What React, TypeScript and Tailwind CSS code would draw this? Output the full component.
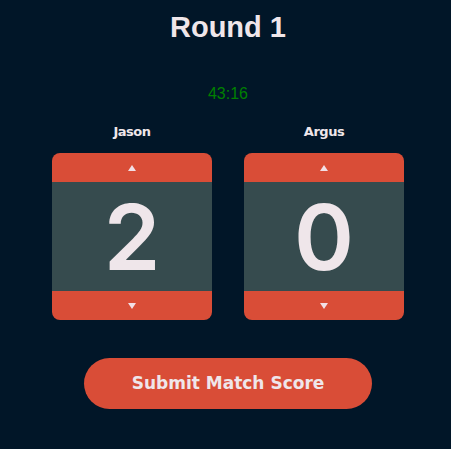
import React from "react";

function Card({ value }: { value: number }) {
  return (
    <div className="w-[160px] h-[167px] rounded-[8px] overflow-hidden flex flex-col">
      <div className="h-[29px] bg-[#d94d37] flex items-center justify-center">
        <svg width="8" height="6" viewBox="0 0 8 6"><polygon points="4,0 8,6 0,6" fill="#f2dfe6" /></svg>
      </div>
      <div className="flex-1 bg-[#364b4e] flex items-center justify-center">
        <span className="text-[91px] leading-none font-semibold text-[#efe6ea] font-['Inter',sans-serif] mt-[2px]">{value}</span>
      </div>
      <div className="h-[29px] bg-[#d94d37] flex items-center justify-center">
        <svg width="8" height="6" viewBox="0 0 8 6"><polygon points="0,0 8,0 4,6" fill="#f2dfe6" /></svg>
      </div>
    </div>
  );
}

export default function App() {
  return (
    <div className="w-[451px] h-[449px] bg-[#011628] flex flex-col items-center pl-[5px] font-['DejaVu_Sans',sans-serif] text-[#efe6ea]">
      <h1 className="mt-[9px] text-[29px] leading-[36px] font-bold font-['Liberation_Sans',sans-serif]">Round 1</h1>
      <div className="mt-[39px] text-[16px] leading-[20px] text-[#008000] font-['Liberation_Sans',sans-serif]">43:16</div>
      <div className="mt-[20px] flex gap-[32px]">
        <div className="flex flex-col items-center">
          <div className="text-[13px] leading-[16px] font-bold tracking-[-0.5px] mb-[13px]">Jason</div>
          <Card value={2} />
        </div>
        <div className="flex flex-col items-center">
          <div className="text-[13px] leading-[16px] font-bold tracking-[-0.5px] mb-[13px]">Argus</div>
          <Card value={0} />
        </div>
      </div>
      <button className="mt-[38px] w-[288px] h-[51px] rounded-full bg-[#d94d37] text-[17px] font-bold text-[#efe6ea]">
        Submit Match Score
      </button>
    </div>
  );
}
